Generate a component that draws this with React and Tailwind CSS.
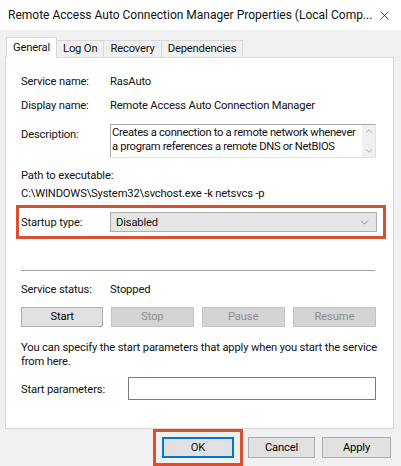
import { ChevronDown, ChevronUp, X } from "lucide-react";

function Tab({ label, active }) {
  if (active) {
    return (
      <div className="relative z-10 -mb-px h-[21px] px-[6px] pt-[2px] bg-white border border-b-0 border-[#d9d9d9]">
        {label}
      </div>
    );
  }
  return (
    <div className="h-[17px] px-[6px] bg-[#f0f0f0] border border-b-0 border-l-0 border-[#d9d9d9] leading-[16px]">
      {label}
    </div>
  );
}

function Btn({ children, disabled, className = "" }) {
  return (
    <div
      className={
        "h-[20px] flex items-center justify-center border " +
        (disabled
          ? "bg-[#d4d4d4] border-[#c4c4c4] text-[#8f8f8f] "
          : "bg-[#e1e1e1] border-[#adadad] text-black ") +
        className
      }
    >
      {children}
    </div>
  );
}

export default function App() {
  return (
    <div className="w-[401px] h-[466px] bg-[#f0f0f0] overflow-hidden text-[11.2px] tracking-[-0.15px] leading-[16px] text-[#111] font-['Segoe_UI','Roboto',sans-serif] flex flex-col">
      {/* title bar */}
      <div className="h-[30px] shrink-0 bg-white flex items-center justify-between pl-[8px] pr-[9px]">
        <span className="whitespace-nowrap text-[12px] tracking-normal">Remote Access Auto Connection Manager Properties (Local Comp...</span>
        <X size={15} strokeWidth={1.2} className="text-[#222]" />
      </div>

      {/* tabs */}
      <div className="mt-[7px] pl-[6px] flex items-end">
        <Tab label="General" active />
        <Tab label="Log On" />
        <Tab label="Recovery" />
        <Tab label="Dependencies" />
      </div>

      {/* panel */}
      <div className="mx-[5px] w-[389px] h-[372px] shrink-0 bg-white border border-[#d9d9d9] pl-[15px] pr-[17px] flex flex-col">
        <div className="mt-[16px] flex">
          <span className="w-[89px]">Service name:</span>
          <span>RasAuto</span>
        </div>
        <div className="mt-[8px] flex">
          <span className="w-[89px]">Display name:</span>
          <span>Remote Access Auto Connection Manager</span>
        </div>
        <div className="mt-[10px] flex">
          <span className="w-[89px] pt-[3px]">Description:</span>
          <div className="w-[266px] h-[34px] border border-[#a8a8a8] border-r-[#e3e3e3] border-b-[#e3e3e3] flex">
            <div className="flex-1 pl-[1px] pt-[1px] leading-[14px] tracking-[-0.3px] whitespace-nowrap overflow-hidden">
              <div>Creates a connection to a remote network whenever</div>
              <div>a program references a remote DNS or NetBIOS</div>
            </div>
            <div className="w-[13px] bg-[#f0f0f0] flex flex-col items-center justify-between py-[1px] text-[#888]">
              <ChevronUp size={10} strokeWidth={1.5} />
              <ChevronDown size={10} strokeWidth={1.5} />
            </div>
          </div>
        </div>
        <div className="mt-[10px]">Path to executable:</div>
        <div className="mt-[2px] whitespace-nowrap">C:\WINDOWS\System32\svchost.exe -k netsvcs -p</div>

        {/* highlighted startup type */}
        <div className="mt-[3px] -ml-[5px] w-[370px] h-[34px] border-[3px] border-[#d94f30] flex items-center pl-[2px]">
          <span className="w-[89px] pt-[1px]">Startup type:</span>
          <div className="w-[267px] h-[20px] bg-[#e5e5e5] border border-[#adadad] flex items-center justify-between pl-[5px] pr-[5px]">
            <span className="pt-[1px]">Disabled</span>
            <ChevronDown size={13} strokeWidth={1.2} className="text-[#555]" />
          </div>
        </div>

        <div className="mt-[31px] w-[354px] h-px bg-[#a0a0a0]" />

        <div className="mt-[11px] flex">
          <span className="w-[89px]">Service status:</span>
          <span>Stopped</span>
        </div>
        <div className="mt-[9px] flex gap-[8px]">
          <Btn className="w-[83px]">Start</Btn>
          <Btn disabled className="w-[83px]">Stop</Btn>
          <Btn disabled className="w-[84px]">Pause</Btn>
          <Btn disabled className="w-[84px]">Resume</Btn>
        </div>
        <div className="mt-[14px] leading-[14px] whitespace-nowrap">
          <div>You can specify the start parameters that apply when you start the service</div>
          <div>from here.</div>
        </div>
        <div className="mt-[8px] flex items-center">
          <span className="w-[107px] pt-[2px]">Start parameters:</span>
          <div className="w-[249px] h-[23px] border border-[#7a7a7a] bg-white" />
        </div>
      </div>

      {/* footer buttons */}
      <div className="flex pl-[153px] items-start">
        <div className="w-[90px] h-[37px] border-[3px] border-[#d94f30] flex items-center justify-center">
          <div className="w-[72px] h-[21px] flex items-center justify-center bg-[#e1e1e1] border-2 border-[#0078d7]">OK</div>
        </div>
        <Btn className="mt-[8px] ml-[5px] w-[67px] h-[21px]">Cancel</Btn>
        <Btn className="mt-[8px] ml-[7px] w-[69px] h-[21px]">Apply</Btn>
      </div>
    </div>
  );
}
